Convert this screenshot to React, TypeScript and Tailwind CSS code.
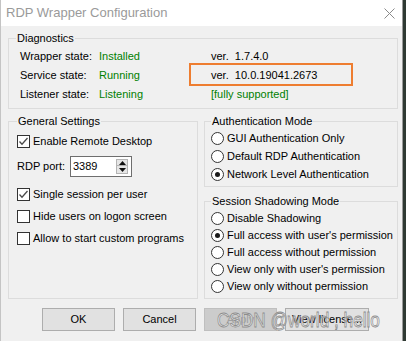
import React from "react";

const CheckBox = ({ checked }: { checked?: boolean }) => (
  <span className="w-[13px] h-[13px] border border-[#333333] bg-white flex items-center justify-center shrink-0">
    {checked && (
      <svg width="11" height="11" viewBox="0 0 11 11">
        <path d="M1.5 5.5 L4 8.2 L9.5 2" fill="none" stroke="#4a4a4a" strokeWidth="1.3" />
      </svg>
    )}
  </span>
);

const Radio = ({ on }: { on?: boolean }) => (
  <span className="w-[13px] h-[13px] rounded-full border border-[#333333] bg-white flex items-center justify-center shrink-0">
    {on && <span className="w-[5px] h-[5px] rounded-full bg-[#1a1a1a]" />}
  </span>
);

const diagRows = [
  { label: "Wrapper state:", value: "Installed", extra: "ver.  1.7.4.0", green: false },
  { label: "Service state:", value: "Running", extra: "ver.  10.0.19041.2673", green: false },
  { label: "Listener state:", value: "Listening", extra: "[fully supported]", green: true },
];

const authModes = [
  { label: "GUI Authentication Only", on: false },
  { label: "Default RDP Authentication", on: false },
  { label: "Network Level Authentication", on: true },
];

const shadowModes = [
  { label: "Disable Shadowing", on: false },
  { label: "Full access with user's permission", on: true },
  { label: "Full access without permission", on: false },
  { label: "View only with user's permission", on: false },
  { label: "View only without permission", on: false },
];

export default function App() {
  return (
    <div className="w-[406px] h-[341px] bg-[#2f3a33] font-['Liberation_Sans',Arial,sans-serif] text-[11px] text-black">
      <div className="relative w-[403px] h-[341px] bg-[#f0f0f0] border-l border-r border-l-[#c4c4c4] border-r-[#9a9a9a] flex flex-col">
        {/* title bar */}
        <div className="h-[26px] bg-white flex items-center justify-between pl-[5px] pr-[7px] shrink-0">
          <span className="text-[13px] leading-[26px] text-[#9a9a9a]">RDP Wrapper Configuration</span>
          <svg width="11" height="11" viewBox="0 0 11 11">
            <path d="M0.5 0.5 L10.5 10.5 M10.5 0.5 L0.5 10.5" stroke="#8a8a8a" strokeWidth="1" />
          </svg>
        </div>

        <div className="flex flex-col pt-[6px] pl-[7px]">
          {/* Diagnostics */}
          <fieldset className="w-[390px] border border-[#dcdcdc]">
            <legend className="ml-[7px] px-px leading-[13px]">Diagnostics</legend>
            <div className="pt-[2px] pb-[4px] pl-[11px] grid grid-cols-[79px_112px_1fr] leading-[19px]">
              {diagRows.map((r) => (
                <React.Fragment key={r.label}>
                  <span>{r.label}</span>
                  <span className="text-[#008000]">{r.value}</span>
                  <span className={r.green ? "text-[#008000] whitespace-pre" : "whitespace-pre"}>{r.extra}</span>
                </React.Fragment>
              ))}
            </div>
          </fieldset>

          <div className="flex gap-[6px] mt-[6px]">
            {/* General Settings */}
            <fieldset className="w-[190px] border border-[#dcdcdc]">
              <legend className="ml-[8px] px-px leading-[13px]">General Settings</legend>
              <div className="flex flex-col pl-[8px]">
                <label className="mt-[5px] h-[17px] flex items-center gap-[3px]">
                  <CheckBox checked />
                  <span>Enable Remote Desktop</span>
                </label>
                <div className="mt-[6px] h-[21px] flex items-center">
                  <span className="w-[53px]">RDP port:</span>
                  <div className="w-[62px] h-[21px] border border-[#6e6e6e] bg-white flex items-center pl-[2px] pr-[3px]">
                    <span className="flex-1">3389</span>
                    <div className="w-[12px] h-[15px] flex flex-col">
                      <div className="h-[7px] bg-[#e6e6e6] border border-[#b4b4b4] flex items-center justify-center">
                        <svg width="7" height="4" viewBox="0 0 7 4">
                          <path d="M0 4 L3.5 0 L7 4 Z" fill="#111" />
                        </svg>
                      </div>
                      <div className="h-[8px] bg-[#e6e6e6] border border-t-0 border-[#b4b4b4] flex items-center justify-center">
                        <svg width="7" height="4" viewBox="0 0 7 4">
                          <path d="M0 0 L7 0 L3.5 4 Z" fill="#111" />
                        </svg>
                      </div>
                    </div>
                  </div>
                </div>
                <label className="mt-[9px] h-[17px] flex items-center gap-[3px]">
                  <CheckBox checked />
                  <span>Single session per user</span>
                </label>
                <label className="mt-[5px] h-[17px] flex items-center gap-[3px]">
                  <CheckBox />
                  <span>Hide users on logon screen</span>
                </label>
                <label className="mt-[5px] h-[17px] flex items-center gap-[3px]">
                  <CheckBox />
                  <span>Allow to start custom programs</span>
                </label>
              </div>
            </fieldset>

            {/* right column */}
            <div className="flex flex-col">
              <fieldset className="w-[194px] border border-[#dcdcdc]">
                <legend className="ml-[6px] px-px leading-[13px]">Authentication Mode</legend>
                <div className="flex flex-col pl-[6px] pt-[1px] pb-[3px]">
                  {authModes.map((m) => (
                    <label key={m.label} className="h-[18px] flex items-center gap-[3px]">
                      <Radio on={m.on} />
                      <span>{m.label}</span>
                    </label>
                  ))}
                </div>
              </fieldset>
              <fieldset className="w-[194px] border border-[#dcdcdc] mt-[8px]">
                <legend className="ml-[6px] px-px leading-[13px]">Session Shadowing Mode</legend>
                <div className="flex flex-col pl-[6px] pt-[2px] pb-[3px]">
                  {shadowModes.map((m) => (
                    <label key={m.label} className="h-[17px] flex items-center gap-[3px]">
                      <Radio on={m.on} />
                      <span>{m.label}</span>
                    </label>
                  ))}
                </div>
              </fieldset>
            </div>
          </div>

          {/* buttons */}
          <div className="flex gap-[8px] mt-[9px] pl-[34px]">
            <button className="w-[73px] h-[23px] bg-[#e1e1e1] border border-[#adadad]">OK</button>
            <button className="w-[73px] h-[23px] bg-[#e1e1e1] border border-[#adadad]">Cancel</button>
            <button disabled className="w-[73px] h-[23px] bg-[#cccccc] border border-[#bfbfbf] text-[#a0a0a0]">Apply</button>
            <button className="w-[84px] h-[23px] bg-[#e1e1e1] border border-[#adadad]">View license...</button>
          </div>
        </div>

        {/* annotation box */}
        <div className="absolute left-[188px] top-[63px] w-[164px] h-[23px] border-2 border-[#ee7d30]" />

        {/* watermark */}
        <div className="absolute left-[216px] top-[306px] origin-left scale-x-[0.82] whitespace-nowrap text-[21px] leading-[28px] text-white/60 [-webkit-text-stroke:0.8px_#8c8c8c] font-['Liberation_Sans',Arial,sans-serif]">
          CSDN @world , hello
        </div>
      </div>
    </div>
  );
}
